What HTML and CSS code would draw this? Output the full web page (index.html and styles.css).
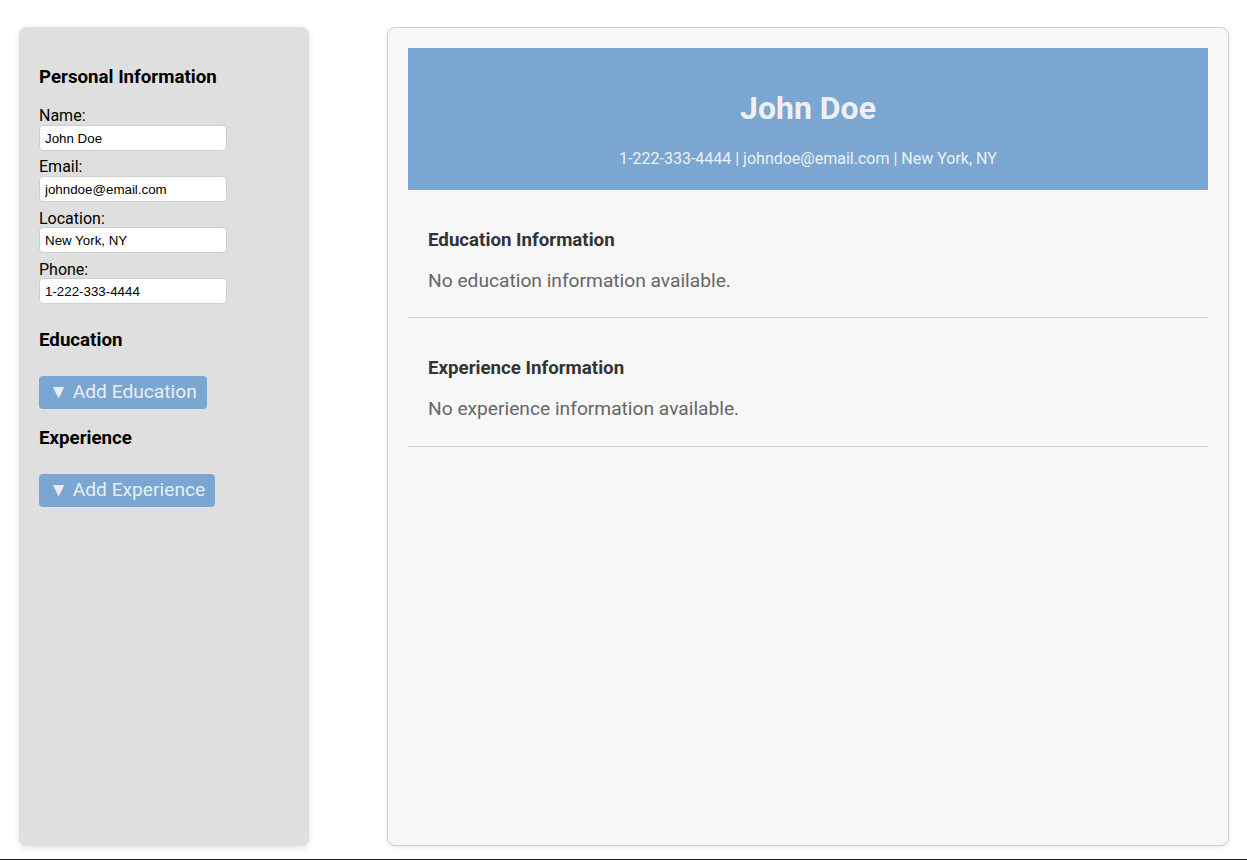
FILE: index.html
```html
<!DOCTYPE html>
<html lang="en">
<head>
<meta charset="utf-8">
<title>CV Builder</title>
<link rel="stylesheet" href="styles.css">
</head>
<body>
<div class="page">
  <aside class="sidebar">
    <h3 class="side-title">Personal Information</h3>
    <div class="field">
      <label class="field-label">Name:</label>
      <input class="field-input" type="text" value="John Doe">
    </div>
    <div class="field">
      <label class="field-label">Email:</label>
      <input class="field-input" type="text" value="johndoe@email.com">
    </div>
    <div class="field">
      <label class="field-label">Location:</label>
      <input class="field-input" type="text" value="New York, NY">
    </div>
    <div class="field">
      <label class="field-label">Phone:</label>
      <input class="field-input" type="text" value="1-222-333-4444">
    </div>
    <h3 class="side-title">Education</h3>
    <button class="add-btn">▼ Add Education</button>
    <h3 class="side-title">Experience</h3>
    <button class="add-btn">▼ Add Experience</button>
  </aside>
  <main class="preview">
    <header class="cv-header">
      <h1 class="cv-name">John Doe</h1>
      <p class="cv-contact">1-222-333-4444 | johndoe@email.com | New York, NY</p>
    </header>
    <section class="cv-section">
      <h3 class="cv-section-title">Education Information</h3>
      <p class="cv-empty">No education information available.</p>
    </section>
    <section class="cv-section">
      <h3 class="cv-section-title">Experience Information</h3>
      <p class="cv-empty">No experience information available.</p>
    </section>
  </main>
</div>
</body>
</html>
```
FILE: styles.css
```css
* { box-sizing: border-box; }
html, body { margin: 0; padding: 0; }
body {
  font-family: Roboto, "Liberation Sans", Arial, sans-serif;
  background: #ffffff;
  color: #000;
}
.page {
  height: 860px;
  padding: 27px 18px 13px 19px;
  border-bottom: 1px solid #222;
  display: flex;
  gap: 78px;
}
.sidebar {
  width: 290px;
  flex: 0 0 290px;
  background: #dfdfdf;
  border-radius: 8px;
  box-shadow: 0 2px 6px rgba(0,0,0,0.12);
  padding: 20px;
  display: flex;
  flex-direction: column;
  align-items: flex-start;
}
.side-title {
  font-size: 18.72px;
  font-weight: bold;
  margin: 18.72px 0;
  line-height: 22px;
}
.field { margin-bottom: 6.3px; }
.field-label {
  display: block;
  font-size: 16px;
  line-height: 18.75px;
  padding-top: 1px;
  margin-bottom: -1px;
}
.field-input {
  display: block;
  width: 188px;
  height: 26px;
  margin: 0;
  padding: 4px 5px;
  font-family: "Liberation Sans", Arial, sans-serif;
  font-size: 13.33px;
  color: #000;
  background: #fff;
  border: 1px solid #cfcfcf;
  border-radius: 4px;
}
.add-btn {
  display: block;
  margin-top: 5.5px;
  padding: 5px 10px;
  height: 33px;
  font-family: Roboto, "Liberation Sans", sans-serif;
  font-size: 19.2px;
  line-height: 22.5px;
  color: #e9eef4;
  background: #7aa6d1;
  border: none;
  border-radius: 4px;
}
.preview {
  flex: 1;
  background: #f7f7f7;
  border: 1px solid #cfcfcf;
  border-radius: 8px;
  box-shadow: 0 2px 6px rgba(0,0,0,0.08);
  padding: 20px;
}
.cv-header {
  background: #7aa6d1;
  color: #eef0f3;
  text-align: center;
  padding: 21px 20px 21px;
}
.cv-name {
  font-size: 32px;
  line-height: 37.5px;
  margin: 21.44px 0 22.44px;
  font-weight: bold;
}
.cv-contact {
  margin: 0;
  font-size: 16px;
  line-height: 18.75px;
}
.cv-section {
  padding: 20px 20px 7px;
  border-bottom: 1px solid #d2d2d2;
}
.cv-section-title {
  font-size: 18.72px;
  line-height: 22px;
  margin: 18.72px 0 19px;
  color: #333;
  font-weight: bold;
}
.cv-empty {
  font-size: 19.2px;
  line-height: 22.5px;
  margin: 0 0 18px;
  color: #666;
}
```
